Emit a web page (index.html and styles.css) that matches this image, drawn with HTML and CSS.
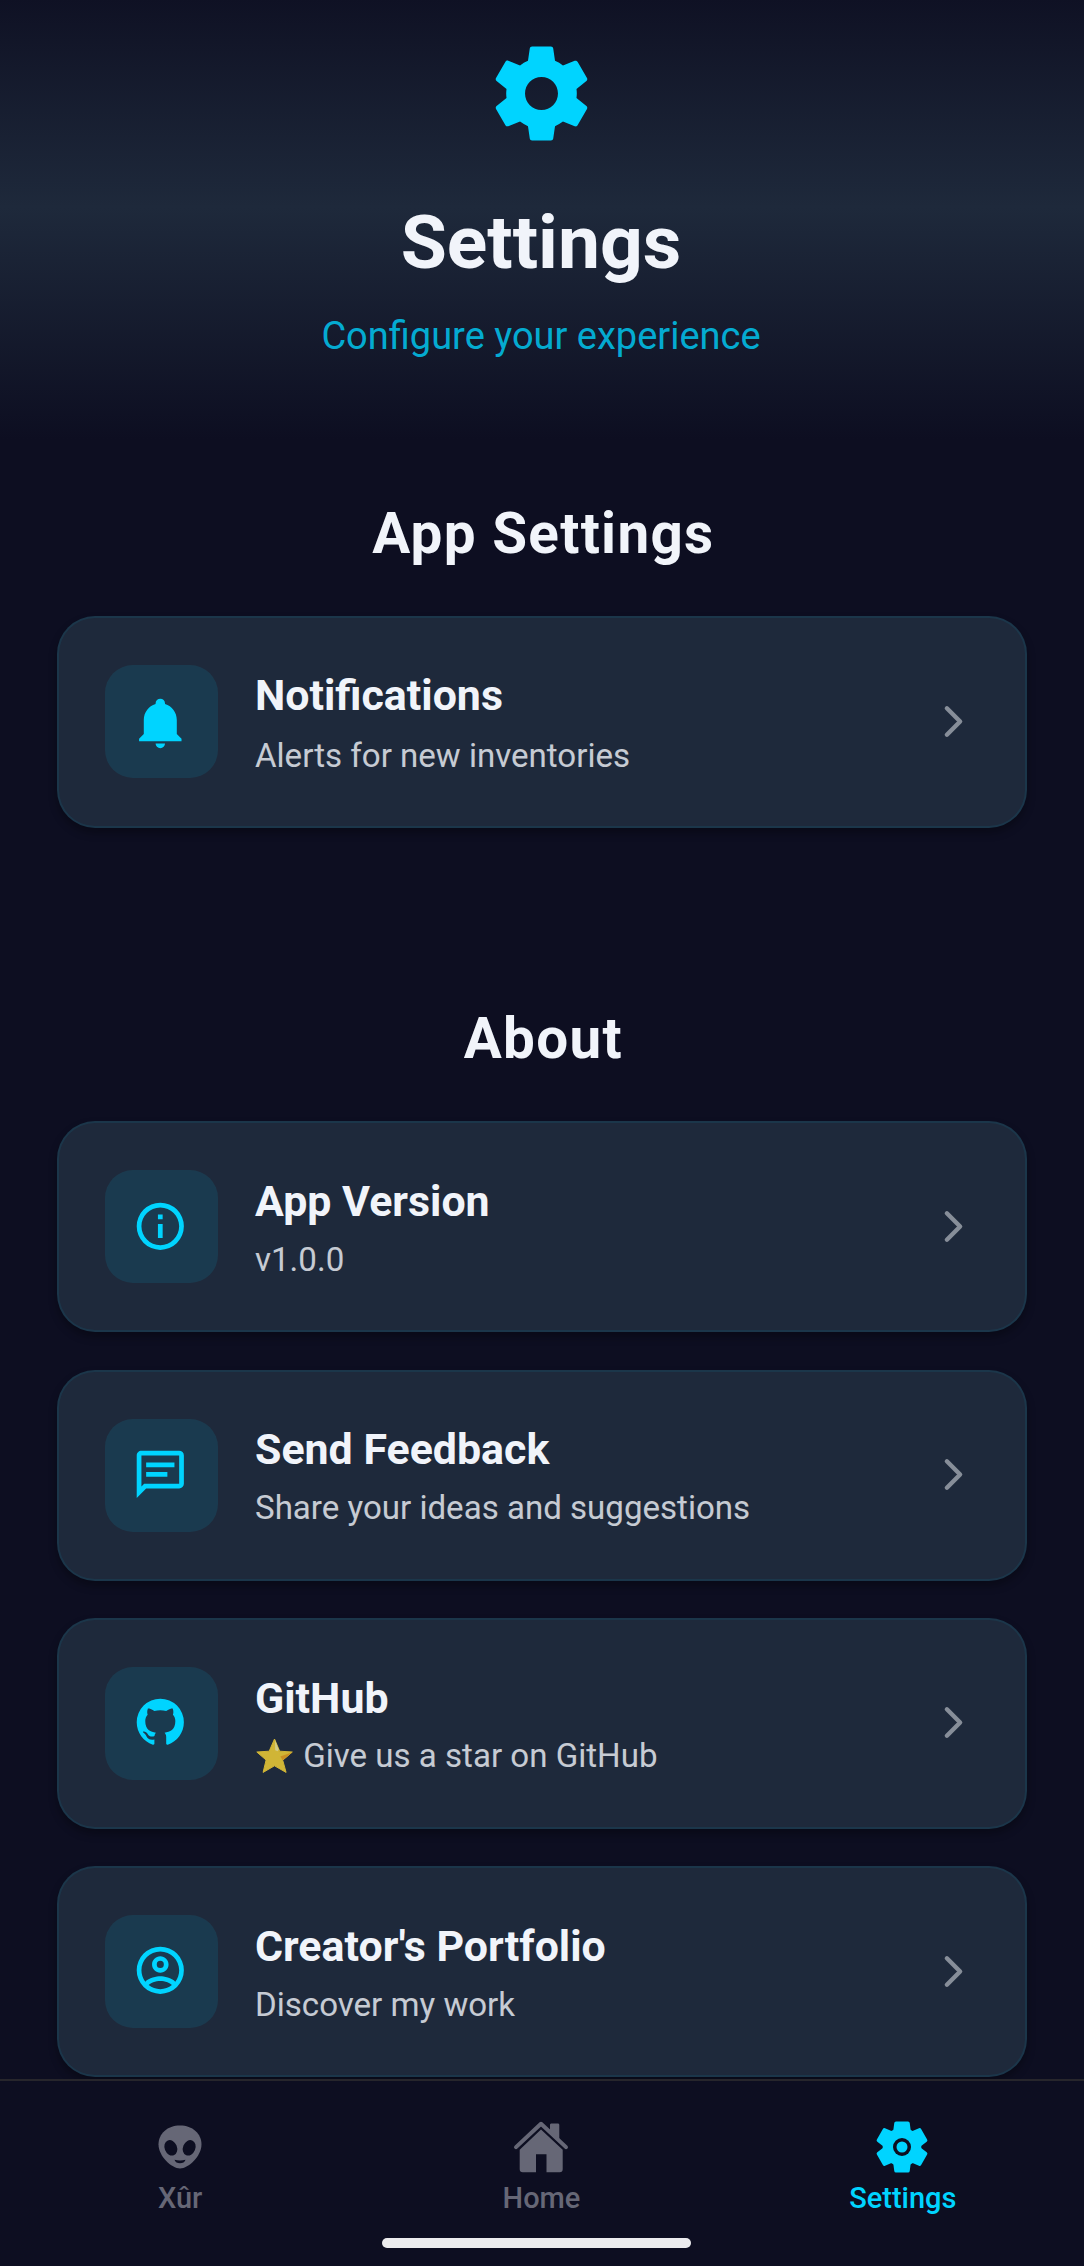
FILE: index.html
```html
<!DOCTYPE html>
<html lang="en">
<head>
<meta charset="utf-8">
<title>Settings</title>
<link rel="stylesheet" href="styles.css">
</head>
<body>
<svg class="defs" width="0" height="0" aria-hidden="true">
  <symbol id="chevron" viewBox="0 0 512 512"><path fill="none" stroke="currentColor" stroke-linecap="round" stroke-linejoin="round" stroke-width="48" d="M184 112l144 144-144 144"/></symbol>
</svg>
<div class="screen">
  <main class="content">
    <header class="hero">
      <svg class="hero-icon" viewBox="0 0 24 24"><path d="M19.43 12.98c.04-.32.07-.64.07-.98s-.03-.66-.07-.98l2.11-1.65c.19-.15.24-.42.12-.64l-2-3.46c-.12-.22-.39-.3-.61-.22l-2.49 1c-.52-.4-1.08-.73-1.69-.98l-.38-2.65C14.46 2.18 14.25 2 14 2h-4c-.25 0-.46.18-.49.42l-.38 2.65c-.61.25-1.17.59-1.69.98l-2.49-1c-.23-.09-.49 0-.61.22l-2 3.46c-.13.22-.07.49.12.64l2.11 1.65c-.04.32-.07.65-.07.98s.03.66.07.98l-2.11 1.65c-.19.15-.24.42-.12.64l2 3.46c.12.22.39.3.61.22l2.49-1c.52.4 1.08.73 1.69.98l.38 2.65c.03.24.24.42.49.42h4c.25 0 .46-.18.49-.42l.38-2.65c.61-.25 1.17-.59 1.69-.98l2.49 1c.23.09.49 0 .61-.22l2-3.46c.12-.22.07-.49-.12-.64l-2.11-1.65zM12 15.5c-1.93 0-3.5-1.57-3.5-3.5s1.57-3.5 3.5-3.5 3.5 1.57 3.5 3.5-1.57 3.5-3.5 3.5z"/></svg>
      <h1 class="hero-title">Settings</h1>
      <p class="hero-subtitle">Configure your experience</p>
    </header>

    <section class="section">
      <h2 class="section-title">App Settings</h2>
      <div class="list">
        <a class="card card-tall">
          <span class="badge"><svg viewBox="0 0 24 24"><path d="M21 19v1H3v-1l2-2v-6c0-3.1 2.03-5.83 5-6.71V4a2 2 0 0 1 4 0v.29c2.97.88 5 3.61 5 6.71v6l2 2m-7 2a2 2 0 0 1-4 0"/></svg></span>
          <span class="card-text"><span class="card-title">Notifications</span><span class="card-sub">Alerts for new inventories</span></span>
          <svg class="chevron"><use href="#chevron"/></svg>
        </a>
      </div>
    </section>

    <section class="section">
      <h2 class="section-title">About</h2>
      <div class="list">
        <a class="card">
          <span class="badge"><svg viewBox="0 0 24 24"><path d="M11 9h2V7h-2m1 13c-4.41 0-8-3.59-8-8s3.59-8 8-8 8 3.59 8 8-3.59 8-8 8m0-18A10 10 0 0 0 2 12a10 10 0 0 0 10 10 10 10 0 0 0 10-10A10 10 0 0 0 12 2m-1 15h2v-6h-2v6z"/></svg></span>
          <span class="card-text"><span class="card-title">App Version</span><span class="card-sub">v1.0.0</span></span>
          <svg class="chevron"><use href="#chevron"/></svg>
        </a>
        <a class="card">
          <span class="badge"><svg viewBox="0 0 24 24"><path d="M20 2a2 2 0 0 1 2 2v12a2 2 0 0 1-2 2H6l-4 4V4c0-1.11.89-2 2-2h16M4 4v13.17L5.17 16H20V4H4m2 3h12v2H6V7m0 4h9v2H6v-2z"/></svg></span>
          <span class="card-text"><span class="card-title">Send Feedback</span><span class="card-sub">Share your ideas and suggestions</span></span>
          <svg class="chevron"><use href="#chevron"/></svg>
        </a>
        <a class="card">
          <span class="badge"><svg viewBox="0 0 24 24"><path d="M12 2A10 10 0 0 0 2 12c0 4.42 2.87 8.17 6.84 9.5.5.08.66-.23.66-.5v-1.69c-2.77.6-3.36-1.34-3.36-1.34-.46-1.16-1.11-1.47-1.11-1.47-.91-.62.07-.6.07-.6 1 .07 1.53 1.03 1.53 1.03.87 1.52 2.34 1.07 2.91.83.09-.65.35-1.09.63-1.34-2.22-.25-4.55-1.11-4.55-4.92 0-1.11.38-2 1.03-2.71-.1-.25-.45-1.29.1-2.64 0 0 .84-.27 2.75 1.02.79-.22 1.65-.33 2.5-.33s1.71.11 2.5.33c1.91-1.29 2.75-1.02 2.75-1.02.55 1.35.2 2.39.1 2.64.65.71 1.03 1.6 1.03 2.71 0 3.82-2.34 4.66-4.57 4.91.36.31.69.92.69 1.85V21c0 .27.16.59.67.5C19.14 20.16 22 16.42 22 12A10 10 0 0 0 12 2z"/></svg></span>
          <span class="card-text"><span class="card-title">GitHub</span><span class="card-sub"><svg class="star" viewBox="0 0 40 36"><path fill="#fdd835" stroke="#fdd835" stroke-width="1" stroke-linejoin="round" d="M19.5 1l5.2 12.2 12.6.8-9.6 8.2 3.4 12.2-11.6-6.6-11.4 6.6 3-12.4L1.8 14l12.4-.8z"/><path fill="#fff59d" d="M20 2l3.8 9.8-1.2 1.4-2.4-1z"/><path fill="#f4a81d" d="M37.3 14.2l-9.6 8-2.4-3.7z"/></svg> Give us a star on GitHub</span></span>
          <svg class="chevron"><use href="#chevron"/></svg>
        </a>
        <a class="card">
          <span class="badge"><svg viewBox="0 0 24 24"><path d="M12 2A10 10 0 0 0 2 12a10 10 0 0 0 10 10 10 10 0 0 0 10-10A10 10 0 0 0 12 2M7.07 18.28c.43-.9 3.05-1.78 4.93-1.78s4.5.88 4.93 1.78C15.57 19.36 13.86 20 12 20s-3.57-.64-4.93-1.72m11.29-1.45c-1.43-1.74-4.9-2.33-6.36-2.33s-4.93.59-6.36 2.33A7.95 7.95 0 0 1 4 12c0-4.41 3.59-8 8-8s8 3.59 8 8c0 1.82-.62 3.5-1.64 4.83M12 6c-1.94 0-3.5 1.56-3.5 3.5S10.06 13 12 13s3.5-1.56 3.5-3.5S13.94 6 12 6m0 5a1.5 1.5 0 0 1 0-3 1.5 1.5 0 0 1 0 3z"/></svg></span>
          <span class="card-text"><span class="card-title">Creator's Portfolio</span><span class="card-sub">Discover my work</span></span>
          <svg class="chevron"><use href="#chevron"/></svg>
        </a>
      </div>
    </section>
  </main>

  <nav class="tabs">
    <div class="tab-row">
      <a class="tab">
        <svg class="tab-icon" viewBox="-28 -28 56 56"><path fill="currentColor" d="M0-21.5C12.500-21.500 21.500-13.500 21.500-2.500 21.500 9 8.500 21.500 0 21.500S-21.500 9-21.500-2.500C-21.500-13.500-12.500-21.500 0-21.500z"/><g class="cut"><ellipse cx="-9.200" cy=".8" rx="6.200" ry="8" transform="rotate(-22 -9.200 .8)"/><ellipse cx="9.200" cy=".8" rx="6.200" ry="8" transform="rotate(22 9.200 .8)"/><path d="M-5.500 12.700c3.500 1 7.500 1 11 0C4.500 17.500-4.500 17.500-5.500 12.700z"/></g></svg>
        <span class="tab-label">Xûr</span>
      </a>
      <a class="tab">
        <svg class="tab-icon" viewBox="-1 -2.500 56 56"><path fill="currentColor" d="M36 3.500c0-1 .6-1.500 1.500-1.500h6.300c.9 0 1.500.5 1.500 1.500v16L36 11zM27 8l21.700 20.300v19.400c0 2-1 3-3 3H32.500v-18H22v18H8.700c-2 0-3-1-3-3V28.300z"/><path fill="none" stroke="currentColor" stroke-width="4" stroke-linecap="round" stroke-linejoin="round" d="M2 25.600L27 2.300l25 23.300"/></svg>
        <span class="tab-label">Home</span>
      </a>
      <a class="tab tab-active">
        <svg class="tab-icon" viewBox="-28 -28 56 56"><g fill="currentColor" stroke="currentColor" stroke-width="3.500" stroke-linejoin="round"><path id="tooth" d="M-6-23.800H6L7.800-10H-7.800z"/><use href="#tooth" transform="rotate(60)"/><use href="#tooth" transform="rotate(120)"/><use href="#tooth" transform="rotate(180)"/><use href="#tooth" transform="rotate(240)"/><use href="#tooth" transform="rotate(300)"/><circle r="17.600"/></g><circle class="cut" r="9"/><circle fill="currentColor" r="5.500"/></svg>
        <span class="tab-label">Settings</span>
      </a>
    </div>
    <div class="home-indicator"></div>
  </nav>
</div>
</body>
</html>
```

FILE: styles.css
```css
:root {
  --bg: #0d0e21;
  --surface: #1e293b;
  --accent: #00d4ff;
  --text: #f1f4fa;
  --muted: #666776;
}

* { box-sizing: border-box; }

body {
  margin: 0;
  background: var(--bg);
  color: var(--text);
  font-family: Roboto, sans-serif;
}

h1, h2, p { margin: 0; }
.defs { display: block; }

.screen {
  display: flex;
  flex-direction: column;
  height: 2266px;
  overflow: hidden;
}

.content {
  flex: 1;
  min-height: 0;
  overflow: hidden;
}

.hero {
  display: flex;
  flex-direction: column;
  align-items: center;
  height: 440px;
  padding: 37px 2px 0 0;
  background: linear-gradient(to bottom, var(--bg) -28px, #1e293b 207px, var(--bg) 440px);
}

.hero-icon {
  width: 113px;
  height: 113px;
  fill: var(--accent);
}

.hero-title {
  margin-top: 48px;
  font-size: 75px;
  font-weight: 700;
  line-height: 88px;
}

.hero-subtitle {
  margin-top: 28px;
  color: rgba(0, 212, 255, 0.8);
  font-size: 38px;
  line-height: 45px;
}

.section {
  padding: 60.6px 57px 0;
}

.section + .section { padding-top: 178px; }

.section-title {
  margin-bottom: 49.4px;
  padding-left: 2.6px;
  font-size: 56.6px;
  font-weight: 700;
  letter-spacing: 1.3px;
  line-height: 66px;
  text-align: center;
}

.list {
  display: flex;
  flex-direction: column;
  gap: 37.3px;
}

.card {
  display: flex;
  align-items: center;
  height: 211px;
  padding: 0 48px 0 46px;
  border: 2px solid rgba(0, 212, 255, 0.08);
  border-radius: 38px;
  background: var(--surface);
  box-shadow: 0 5px 9px rgba(0, 0, 0, 0.3);
}

.card-tall { height: 212px; }
.card-tall .card-text { gap: 14px; }

.badge {
  display: flex;
  align-items: center;
  justify-content: center;
  flex: none;
  width: 113px;
  height: 113px;
  padding: 0 2px 2px 0;
  border-radius: 28px;
  background: rgba(0, 212, 255, 0.1);
}

.card-tall .badge { padding-bottom: 0; }

.badge svg {
  width: 56.6px;
  height: 56.6px;
  fill: var(--accent);
}

.card-text {
  display: flex;
  flex: 1;
  flex-direction: column;
  gap: 12px;
  margin-left: 37px;
  padding-top: 1px;
}

.card-title {
  font-size: 42.9px;
  font-weight: 700;
  line-height: 51.6px;
}

.card-sub {
  font-size: 33.1px;
  line-height: 39px;
  opacity: 0.8;
}

.star {
  width: 40px;
  height: 36px;
  vertical-align: -7px;
}

.chevron {
  width: 47px;
  height: 47px;
  margin-bottom: 1px;
  color: #878e99;
}

.tabs {
  display: flex;
  flex: none;
  flex-direction: column;
  align-items: center;
  height: 187px;
  border-top: 2px solid #27262c;
  background: var(--bg);
}

.tab-row {
  display: flex;
  align-self: stretch;
  height: 156.500px;
  padding-top: 38px;
}

.tab {
  display: flex;
  flex: 1;
  flex-direction: column;
  align-items: center;
  color: var(--muted);
}

.tab-active { color: var(--accent); }

.tab-icon {
  width: 56px;
  height: 56px;
  margin-right: 2px;
}

.cut { fill: var(--bg); }

.tab-label {
  margin-top: 5.5px;
  padding-right: 1px;
  font-size: 29px;
  font-weight: 500;
  line-height: 35px;
}

.home-indicator {
  width: 309px;
  height: 10px;
  margin-right: 11px;
  border-radius: 5px;
  background: #ececee;
}
```
